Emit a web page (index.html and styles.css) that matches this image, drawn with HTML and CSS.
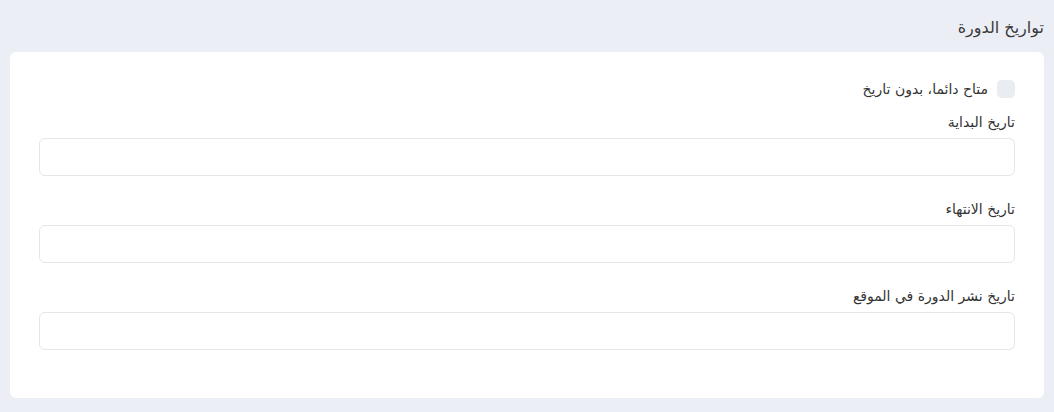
FILE: index.html
```html
<!DOCTYPE html>
<html lang="ar" dir="rtl">
<head>
<meta charset="utf-8">
<link rel="stylesheet" href="styles.css">
</head>
<body>
<div class="page">
  <h2 class="section-title">تواريخ الدورة</h2>
  <div class="card">
    <label class="check-row">
      <span class="check-box"></span>
      <span class="check-label">متاح دائما، بدون تاريخ</span>
    </label>
    <div class="field">
      <div class="field-label">تاريخ البداية</div>
      <div class="input"></div>
    </div>
    <div class="field">
      <div class="field-label">تاريخ الانتهاء</div>
      <div class="input"></div>
    </div>
    <div class="field">
      <div class="field-label">تاريخ نشر الدورة في الموقع</div>
      <div class="input"></div>
    </div>
  </div>
</div>
</body>
</html>
```
FILE: styles.css
```css
* { box-sizing: border-box; }
html, body { margin: 0; padding: 0; }
body {
  background: #eceef6;
  font-family: "DejaVu Sans", "Noto Sans", sans-serif;
  color: #3b3b3b;
  width: 1054px;
  height: 412px;
  overflow: hidden;
}
.page {
  padding: 0 10px 0 10px;
}
.section-title {
  margin: 0;
  height: 52px;
  display: flex;
  align-items: center;
  padding-top: 2px;
  font-size: 16px;
  font-weight: normal;
  color: #3a3a3a;
}
.card {
  background: #fff;
  border-radius: 6px;
  padding: 28px 29px 48px 29px;
  display: flex;
  flex-direction: column;
}
.check-row {
  display: flex;
  align-items: center;
  gap: 9px;
  height: 18px;
  margin-bottom: 13px;
}
.check-box {
  width: 18px;
  height: 18px;
  border-radius: 5px;
  background: #e9ecf0;
}
.check-label {
  font-size: 14px;
  color: #333;
}
.field {
  display: flex;
  flex-direction: column;
}
.field + .field { margin-top: 22px; }
.field-label {
  font-size: 14px;
  color: #333;
  height: 22px;
  line-height: 22px;
  margin-bottom: 5px;
}
.input {
  height: 38px;
  border: 1px solid #e3e6ea;
  border-radius: 6px;
  background: #fff;
}
```
